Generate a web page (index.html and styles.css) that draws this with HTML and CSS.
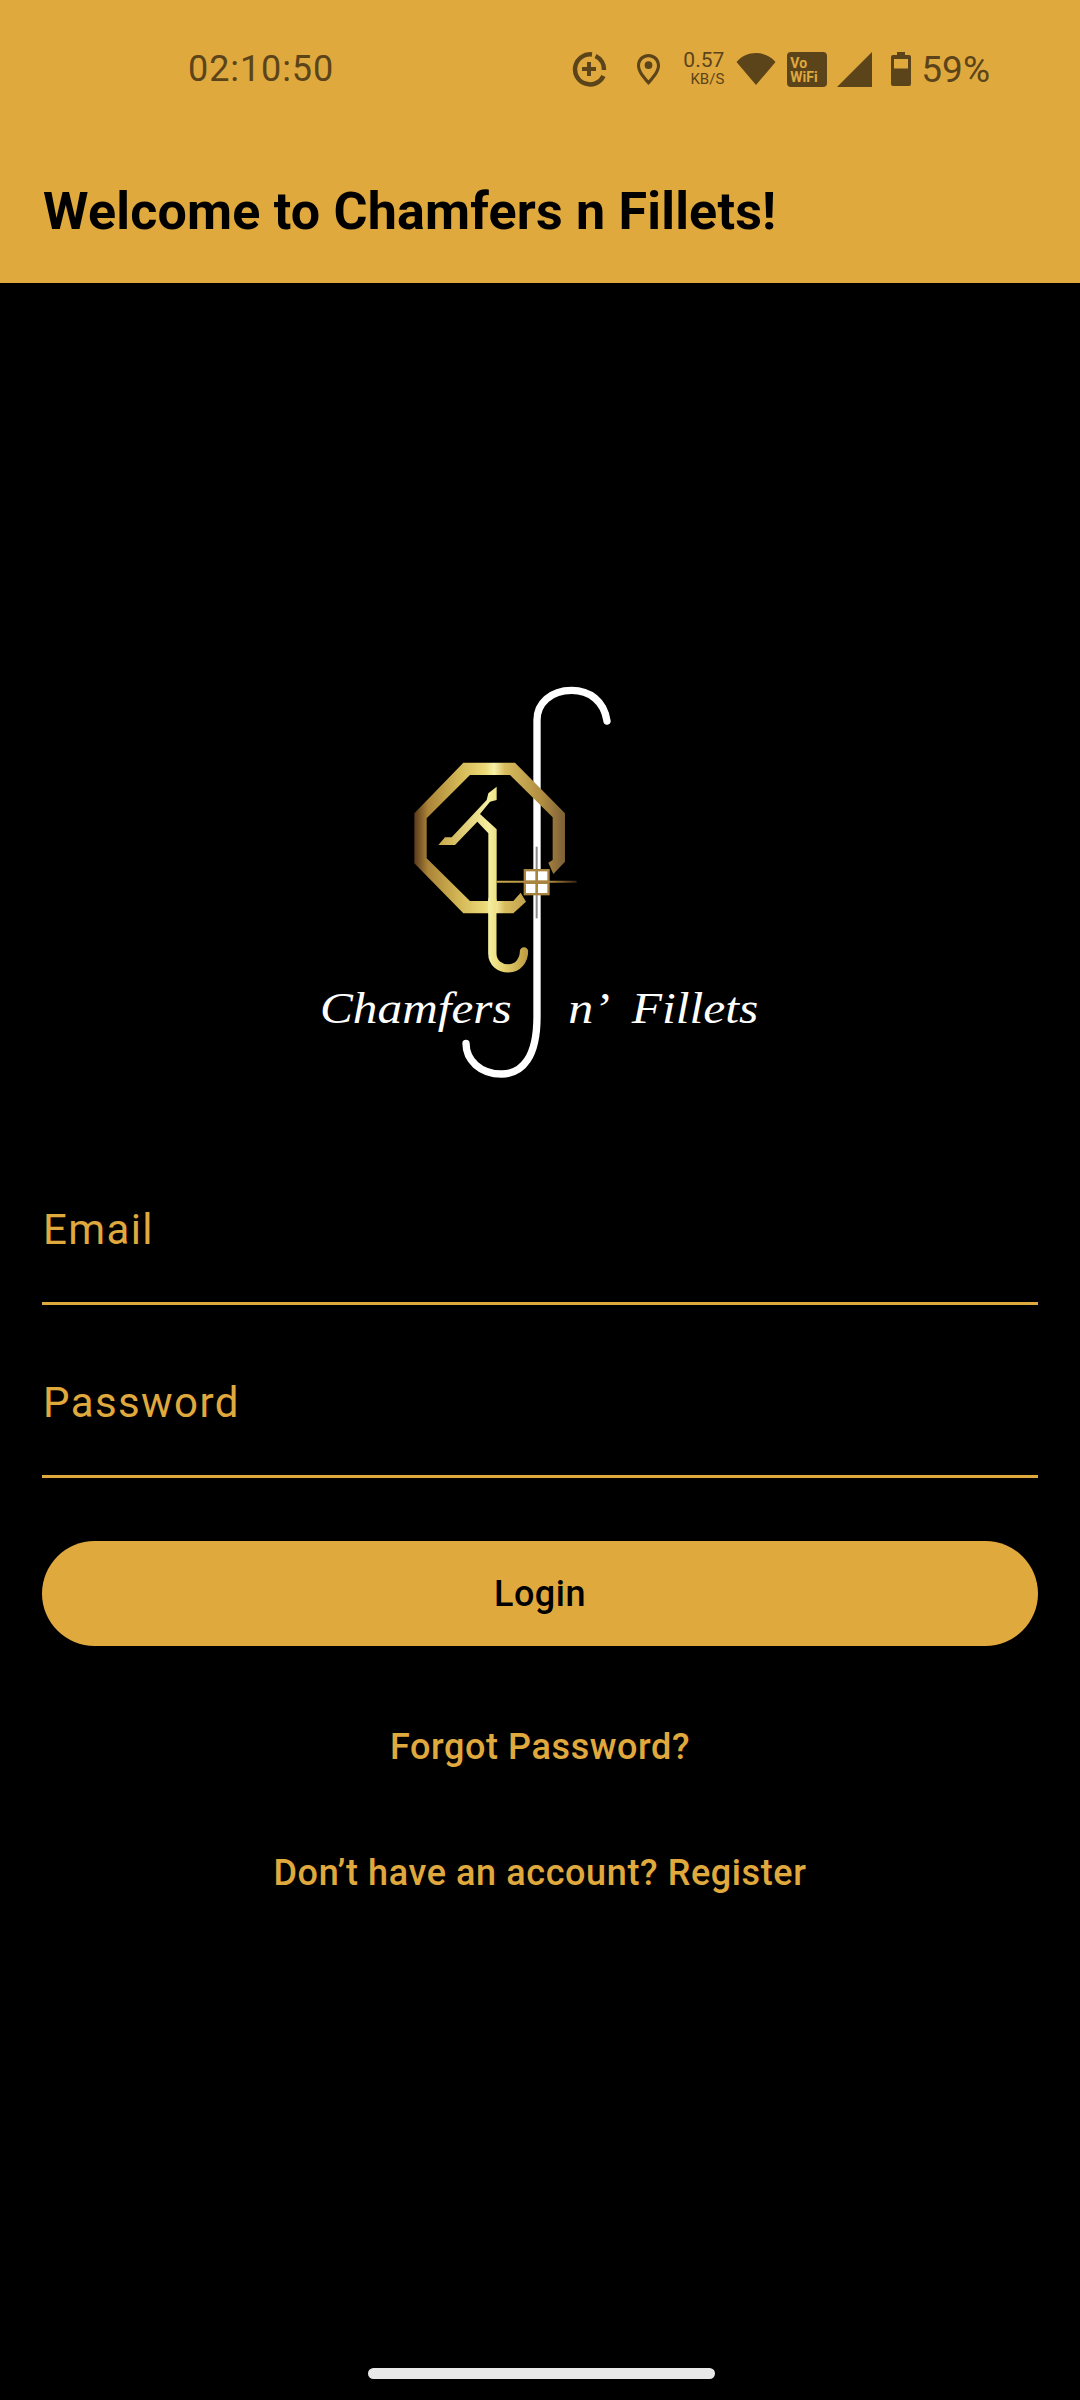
FILE: index.html
```html
<!DOCTYPE html>
<html lang="en">
<head>
<meta charset="utf-8">
<title>Chamfers n Fillets</title>
<link rel="stylesheet" href="styles.css">
</head>
<body>
<header class="header">
  <div class="status">
    <span class="time">02:10:50</span>
    <div class="status-icons">
      <svg class="ic ic-data" viewBox="0 0 36 36"><path d="M21 3.500A15 15 0 1 0 32.500 25" class="ring"/><path d="M24.500 5A15 15 0 0 1 33 19" class="ring"/><path d="M18 11v14M11 18h14" class="plus"/></svg>
      <svg class="ic ic-pin" viewBox="0 0 26 34"><path fill-rule="evenodd" d="M13 1C6 1 1 6.300 1 13c0 7 7 14.500 12 20 5-5.500 12-13 12-20C25 6.300 20 1 13 1zm0 3.200c5 0 8.800 3.900 8.800 8.800 0 4.800-4.800 10.600-8.800 15.200C9 23.600 4.200 17.800 4.200 13 4.200 8.100 8 4.200 13 4.200z"/><circle cx="13" cy="12.500" r="4"/></svg>
      <div class="speed"><span class="speed-val">0.57</span><span class="speed-unit">KB/S</span></div>
      <svg class="ic ic-wifi" viewBox="0 0 40 34"><path d="M0.500 10C5.500 4 12.500 1 20 1s14.500 3 19.500 9L20 33z"/></svg>
      <div class="vowifi"><span>Vo</span><span>WiFi</span></div>
      <svg class="ic ic-signal" viewBox="0 0 36 35"><path d="M35 0v35H0z"/></svg>
      <svg class="ic ic-batt" viewBox="0 0 20 34"><path fill-rule="evenodd" d="M6 0h8v3h4a2 2 0 0 1 2 2v27a2 2 0 0 1-2 2H2a2 2 0 0 1-2-2V5a2 2 0 0 1 2-2h4zM3 7v9.500h14V7z"/></svg>
      <span class="pct">59%</span>
    </div>
  </div>
  <h1 class="title">Welcome to Chamfers n Fillets!</h1>
</header>
<main class="main">
  <svg class="logo" viewBox="0 0 1440 1260">
    <defs>
      <linearGradient id="gold" gradientUnits="userSpaceOnUse" x1="343" y1="0" x2="795" y2="0">
        <stop offset="0" stop-color="#5a3a1c"/>
        <stop offset=".09" stop-color="#ab8438"/>
        <stop offset=".3" stop-color="#d4b856"/>
        <stop offset=".47" stop-color="#ecd978"/>
        <stop offset=".53" stop-color="#f8f2a8"/>
        <stop offset=".6" stop-color="#d8bd5e"/>
        <stop offset=".85" stop-color="#b08c40"/>
        <stop offset="1" stop-color="#7d5f38"/>
      </linearGradient>
      <linearGradient id="stem" gradientUnits="userSpaceOnUse" x1="415" y1="0" x2="690" y2="0">
        <stop offset="0" stop-color="#c9a94a"/>
        <stop offset=".55" stop-color="#f5efa0"/>
        <stop offset=".7" stop-color="#e8d470"/>
        <stop offset="1" stop-color="#b8953c"/>
      </linearGradient>
      <linearGradient id="spark" gradientUnits="userSpaceOnUse" x1="590" y1="0" x2="830" y2="0">
        <stop offset="0" stop-color="#c9a94a"/>
        <stop offset=".7" stop-color="#a9843f"/>
        <stop offset="1" stop-color="#3a2412"/>
      </linearGradient>
    </defs>
    <path class="long-s" d="M921 153C912 92 868 61 815 61 752 61 711 100 711 150V1040C711 1160 668 1212 605 1212 540 1212 498 1170 498 1120"/>
    <path fill="url(#gold)" d="M745 578 758 570V442L630 315H510L380 445V565L510 693H640L662 668 678 695 640 730H490L343 580V430L490 278H645L795 430V575L760 612z"/>
    <path fill="url(#stem)" d="M590 350V390L570 395 540 432 590 478V700H565V490L532 455 465 525H415L435 502H455L560 390 565 370z"/>
    <path class="hook" stroke="url(#stem)" d="M577 690V850C577 880 600 895 625 895 655 895 672 870 672 844"/>
    <path class="gray-line" d="M710 530V745"/>
    <path class="spark-line" stroke="url(#spark)" d="M590 635H830"/>
    <rect class="win-frame" x="671" y="597" width="78" height="79"/>
    <rect class="win" x="678" y="604" width="28" height="27"/>
    <rect class="win" x="714" y="604" width="28" height="27"/>
    <rect class="win" x="678" y="642" width="28" height="27"/>
    <rect class="win" x="714" y="642" width="28" height="27"/>
    <text class="logo-text" x="60" y="1058" textLength="575" lengthAdjust="spacingAndGlyphs">Chamfers</text>
    <text class="logo-text" x="805" y="1058" textLength="125" lengthAdjust="spacingAndGlyphs">n’</text>
    <text class="logo-text" x="995" y="1058" textLength="380" lengthAdjust="spacingAndGlyphs">Fillets</text>
  </svg>
  <form class="form">
    <div class="field"><span class="field-label">Email</span></div>
    <div class="field"><span class="field-label">Password</span></div>
    <button class="login" type="button">Login</button>
    <a class="link link-forgot">Forgot Password?</a>
    <a class="link link-register">Don’t have an account? Register</a>
  </form>
</main>
<div class="home-bar"></div>
</body>
</html>
```
FILE: styles.css
```css
* { box-sizing: border-box; }
html, body { margin: 0; padding: 0; }
body {
  width: 1080px;
  height: 2400px;
  background: #000;
  font-family: Roboto, sans-serif;
  position: relative;
  overflow: hidden;
}
.header {
  height: 283px;
  background: #e0a93e;
  padding: 0 42px 0 43px;
  color: #000;
}
.status {
  height: 138px;
  display: flex;
  align-items: center;
  padding-left: 145px;
  color: #5c441a;
}
.time { font-size: 36px; font-weight: 400; letter-spacing: .9px; }
.status-icons {
  margin-left: auto;
  margin-right: 48px;
  display: flex;
  align-items: center;
}
.ic { fill: #5c441a; display: block; }
.ic-data { width: 36px; height: 36px; margin-right: 29px; }
.ring { fill: none; stroke: #5c441a; stroke-width: 4.500; }
.plus { fill: none; stroke: #5c441a; stroke-width: 4; }
.ic-pin { width: 25px; height: 33px; margin-right: 22px; }
.speed { display: flex; flex-direction: column; align-items: flex-end; width: 41px; margin-right: 12px; }
.speed-val { font-size: 21px; line-height: 21px; }
.speed-unit { font-size: 15px; line-height: 17px; }
.ic-wifi { width: 40px; height: 34px; margin-right: 11px; }
.vowifi {
  width: 40px;
  height: 35px;
  background: #5c441a;
  border-radius: 4px;
  color: #e0a93e;
  font-size: 14px;
  font-weight: 700;
  line-height: 14px;
  display: flex;
  flex-direction: column;
  padding: 4px 0 0 3px;
  margin-right: 10px;
}
.ic-signal { width: 36px; height: 35px; margin-right: 18px; }
.ic-batt { width: 20px; height: 34px; margin-right: 10px; }
.pct { font-size: 37px; }
.title {
  margin: 0;
  font-size: 52px;
  font-weight: 700;
  line-height: 60px;
  letter-spacing: .2px;
  padding-top: 44px;
}
.main { padding: 0 42px; }
.logo { display: block; width: 480px; height: 420px; margin: 387px 0 0 258px; }
.long-s { fill: none; stroke: #fff; stroke-width: 22; stroke-linecap: round; }
.hook { fill: none; stroke-width: 25; stroke-linecap: round; }
.gray-line { stroke: #8a8a8a; stroke-width: 6; }
.spark-line { stroke-width: 6; fill: none; }
.win-frame { fill: #a9843f; }
.win { fill: #fff; }
.logo-text {
  font-family: "Liberation Serif", serif;
  font-style: italic;
  font-size: 136px;
  fill: #fff;
}
.form { display: flex; flex-direction: column; }
.field {
  height: 116px;
  border-bottom: 3px solid #e0a93e;
  margin-top: 99px;
  padding: 16px 0 0 1px;
  color: #e0a93e;
}
.field + .field { margin-top: 57px; }
.field-label { font-size: 42px; line-height: 50px; letter-spacing: 1.400px; display: block; }
.login {
  margin-top: 63px;
  height: 105px;
  border: 0;
  border-radius: 52.500px;
  background: #e0a93e;
  color: #000;
  font-family: Roboto, sans-serif;
  font-size: 36px;
  font-weight: 500;
  letter-spacing: .5px;
  padding: 0;
}
.link {
  text-align: center;
  color: #e0a93e;
  font-size: 36px;
  font-weight: 500;
  line-height: 42px;
  letter-spacing: .6px;
}
.link-forgot { margin-top: 80px; }
.link-register { margin-top: 84px; }
.home-bar {
  position: absolute;
  left: 368px;
  top: 2368px;
  width: 347px;
  height: 11px;
  border-radius: 5.500px;
  background: #e8e8e8;
}
```
